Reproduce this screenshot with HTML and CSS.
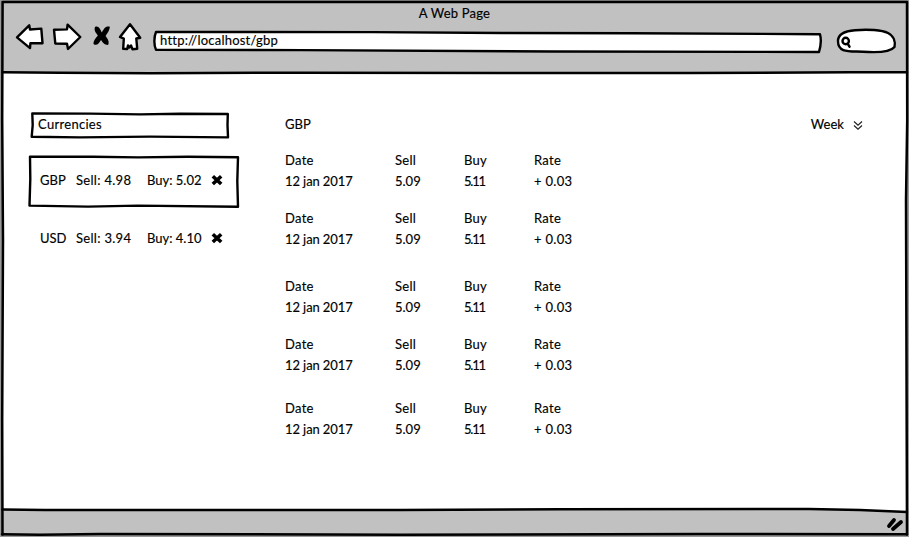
FILE: index.html
```html
<!DOCTYPE html>
<html lang="en">
<head>
<meta charset="utf-8">
<title>A Web Page</title>
<link rel="stylesheet" href="styles.css">
</head>
<body>
<div class="window">
  <svg class="frame" viewBox="0 0 909 537" aria-hidden="true">
    <rect class="edge" x="0" y="0" width="909" height="537"/>
    <path class="paper" d="M2 2H906L907 535H3Z"/>
    <path class="chrome" d="M2 2H907V72.5H3Z M3 509.5L560 509L809 508.8L860 510L907 512V535H3Z"/>
    <path class="ink" d="M2.5 2H907 M2.6 2L2.2 120 3 240 2.2 420 2.5 534.5 M907 2L907.2 120 906 200 907 534.5"/>
    <path class="ink" d="M2.5 72.2L60 72.8 150 73.2 300 72.7 500 73 690 73 850 72.3 907 72.3"/>
    <path class="ink" d="M2.5 509.4L45 510 400 510 560 509.2 809 509 860 510 907 512"/>
    <path class="ink" d="M2 534.3L40 534.8 100 534 400 534.7 700 534 907 534.3"/>
  </svg>
  <header class="toolbar">
    <div class="title">A Web Page</div>
    <div class="controls">
      <svg class="nav" width="130" height="34" viewBox="14 20 130 34" aria-hidden="true">
        <path class="shape" d="M17 37.4L29.2 25.3 30 29.5 41.3 28.6 42.5 43.2 30.4 43.3 30 48.1Z"/>
        <path class="shape" d="M54 29.7L67 29.4 67.6 24.7 80.3 37 68 49 67 43.8 55.3 43.5Z"/>
        <path d="M95 27C98.5 25.2 100.5 29.5 101.8 32.5C104 28.6 105.5 25.6 109.9 26.8C109.6 31 107 33.5 105.6 36C107.4 38.5 109.8 41.5 108.1 45C104 45 102.6 42 101 40C99 43.4 96.5 46.4 93.5 44C93.6 40 96 38 97.8 35.5C96.2 33 93.6 30.5 95 27Z"/>
        <path class="shape" d="M130 24.2L120 37 123.8 38.6 123.2 48.7 127.2 49 128 45.5 129.3 47.5 131 45.5 132.5 49.2 137.2 48.7 136.3 38.5 140.2 37.7Z"/>
      </svg>
      <div class="address">
        <svg class="sketch" viewBox="0 0 670 24" aria-hidden="true"><path class="shape" d="M4 1.9L220 2.1 350 3 480 3.2 668 4.2C669.5 10 668.5 17 667 22L400 21.5 150 20.1 4 19.7C1.8 15 1.8 7 4 1.9Z"/></svg>
        <span class="url">http://localhost/gbp</span>
      </div>
      <svg class="search" width="62" height="28" viewBox="835 27 62 28" aria-hidden="true">
        <path class="shape" d="M838 41C838 34 845 31 855 30.2C868 29 882 30 888 33C894 36 895.5 42 894.5 47C890 52.5 875 52.6 863 51.7C850 51 838 53.5 838 41Z"/>
        <circle class="shape" cx="845.7" cy="41" r="3.2"/><path class="ink" d="M847.8 43.8L849.5 46.6"/>
      </svg>
    </div>
  </header>
  <main class="page">
    <aside class="sidebar">
      <div class="field">
        <svg class="sketch" viewBox="0 0 200 28" aria-hidden="true"><path class="shape" d="M2.3 1.5L60 1.6 110 2.4 150 1.7 197.8 2 197.5 13 198 25.4 120 24.6 50 25.4 1.7 24.7 2.7 13Z"/></svg>
        <span>Currencies</span>
      </div>
      <div class="item selected">
        <svg class="sketch" viewBox="0 0 212 54" aria-hidden="true"><path class="shape" d="M2 1.6L65 1.7 110 2.4 160 1.8 210 2.2 209.3 26 210 51.7 110 50.6 60 51.6 1.5 50.6 2.3 24Z"/></svg>
        <span class="code">GBP</span><span class="sell">Sell: 4.98</span><span class="buy">Buy: 5.02</span>
        <svg class="remove" viewBox="0 0 12 12"><path d="M1.8 2.2L10.2 10M10.2 2.2L1.8 10"/></svg>
      </div>
      <div class="item">
        <span class="code">USD</span><span class="sell">Sell: 3.94</span><span class="buy">Buy: 4.10</span>
        <svg class="remove" viewBox="0 0 12 12"><path d="M1.8 2.2L10.2 10M10.2 2.2L1.8 10"/></svg>
      </div>
    </aside>
    <section class="history">
      <div class="heading">
        <span class="currency">GBP</span>
        <span class="period"><span class="week">Week</span><svg width="10" height="10" viewBox="0 0 10 10" aria-hidden="true"><path d="M1 1.5L5 5.1 9 1.5M1 5.5L5 9.1 9 5.5"/></svg></span>
      </div>
      <div class="rate"><span>Date</span><span>Sell</span><span>Buy</span><span>Rate</span><span class="date">12 jan 2017</span><span class="price">5.09</span><span class="price bid">5.11</span><span>+ 0.03</span></div>
      <div class="rate"><span>Date</span><span>Sell</span><span>Buy</span><span>Rate</span><span class="date">12 jan 2017</span><span class="price">5.09</span><span class="price bid">5.11</span><span>+ 0.03</span></div>
      <div class="rate wide"><span>Date</span><span>Sell</span><span>Buy</span><span>Rate</span><span class="date">12 jan 2017</span><span class="price">5.09</span><span class="price bid">5.11</span><span>+ 0.03</span></div>
      <div class="rate"><span>Date</span><span>Sell</span><span>Buy</span><span>Rate</span><span class="date">12 jan 2017</span><span class="price">5.09</span><span class="price bid">5.11</span><span>+ 0.03</span></div>
      <div class="rate medium"><span>Date</span><span>Sell</span><span>Buy</span><span>Rate</span><span class="date">12 jan 2017</span><span class="price">5.09</span><span class="price bid">5.11</span><span>+ 0.03</span></div>
    </section>
  </main>
  <footer class="status">
    <svg width="18" height="16" viewBox="886 516 18 16" aria-hidden="true"><path class="grip" d="M889 526L894 520M893 529L901 522"/></svg>
  </footer>
</div>
</body>
</html>
```
FILE: styles.css
```css
* { box-sizing: border-box; }
body {
  margin: 0;
  font: 13px/21px Lato, "Open Sans", sans-serif;
  letter-spacing: 0.3px;
  color: #000;
  -webkit-text-stroke: 0.15px #000;
}
svg { display: block; flex: none; }
.window {
  position: relative;
  width: 909px;
  height: 537px;
  display: flex;
  flex-direction: column;
  overflow: hidden;
}
.frame { position: absolute; inset: 0; width: 100%; height: 100%; z-index: -1; }
.edge { fill: #999; }
.paper { fill: #fff; }
.chrome { fill: #c1c1c1; }
.ink { fill: none; stroke: #000; stroke-width: 2.5; stroke-linejoin: round; stroke-linecap: round; }
.shape { fill: #fff; stroke: #000; stroke-width: 2.4; stroke-linejoin: round; }
.sketch { position: absolute; inset: 0; width: 100%; height: 100%; z-index: -1; }

.toolbar { height: 74px; padding-top: 3px; }
.title { height: 17px; text-align: center; letter-spacing: 0.2px; }
.controls { display: flex; padding-left: 14px; }
.nav { margin-right: 8px; }
.address { position: relative; width: 670px; height: 24px; margin-top: 10px; padding: 0 8px; }
.url { letter-spacing: 0.22px; }
.search { margin: 7px 0 0 13px; }

.page { flex: 1; display: flex; padding: 38px 46px 0 28px; }
.sidebar { width: 212px; }
.field { position: relative; width: 200px; height: 28px; margin-left: 2px; padding: 2px 8px; }
.item { position: relative; height: 54px; padding: 0 0 4px 12px; display: flex; align-items: center; }
.selected { margin: 15px 0 4px; }
.code { width: 36px; letter-spacing: 0; }
.sell { width: 71px; }
.buy { width: 64px; letter-spacing: 0; }
.remove { width: 12px; height: 12px; }
.remove path { stroke: #000; stroke-width: 3.6; }

.history { flex: 1; margin-left: 45px; }
.heading { display: flex; justify-content: space-between; height: 21px; margin: 2px 0 15px; }
.currency { letter-spacing: 0; }
.period { display: flex; align-items: center; gap: 9px; }
.week { letter-spacing: 0.05px; }
.period path { fill: none; stroke: #222; stroke-width: 1.2; }
.rate { display: grid; grid-template-columns: 110px 69px 70px 80px; grid-auto-rows: 21px; margin-bottom: 16px; }
.date { letter-spacing: -0.1px; }
.price { letter-spacing: 0; }
.bid { letter-spacing: -1.2px; }
.wide { margin-top: 26px; }
.medium { margin-top: 22px; }

.status { height: 28px; display: flex; justify-content: flex-end; padding: 7px 5px 0 0; }
.grip { stroke: #000; stroke-width: 3.8; stroke-linecap: round; }
```
